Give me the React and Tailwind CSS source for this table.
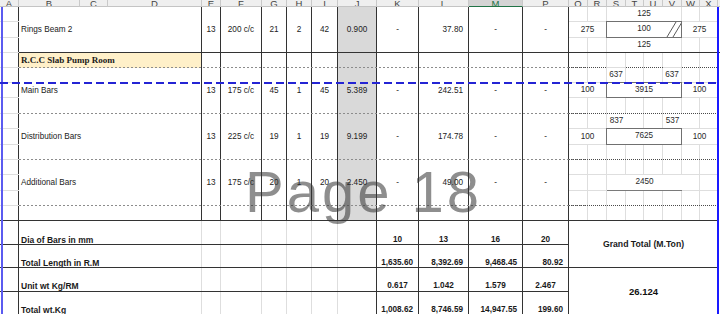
import React from 'react';

const COL = {
  1: 'col-start-1', 2: 'col-start-2', 3: 'col-start-3', 4: 'col-start-4', 5: 'col-start-5',
  6: 'col-start-6', 7: 'col-start-7', 8: 'col-start-8', 9: 'col-start-9', 10: 'col-start-10',
  11: 'col-start-11', 12: 'col-start-12', 13: 'col-start-13', 14: 'col-start-14', 15: 'col-start-15',
  16: 'col-start-16', 17: 'col-start-17', 18: 'col-start-18', 19: 'col-start-19', 20: 'col-start-20',
  21: 'col-start-21', 22: 'col-start-22', 23: 'col-start-23',
};
const SPAN = {
  1: 'col-span-1', 2: 'col-span-2', 3: 'col-span-3', 4: 'col-span-4', 8: 'col-span-8',
  14: 'col-span-14', 22: 'col-span-22',
};
const ROW = {
  1: 'row-start-1', 2: 'row-start-2', 3: 'row-start-3', 4: 'row-start-4', 5: 'row-start-5',
  6: 'row-start-6', 7: 'row-start-7', 8: 'row-start-8', 9: 'row-start-9', 10: 'row-start-10',
  11: 'row-start-11', 12: 'row-start-12', 13: 'row-start-13', 14: 'row-start-14', 15: 'row-start-15',
  16: 'row-start-16', 17: 'row-start-17', 18: 'row-start-18', 19: 'row-start-19',
};
const RSPAN = { 1: 'row-span-1', 2: 'row-span-2', 3: 'row-span-3' };

const LINE = {
  dark: 'bg-[#333]',
  light: 'bg-[#dedede]',
  dashed: 'bg-[repeating-linear-gradient(90deg,#8c8c8c_0_2px,transparent_2px_4px)]',
  dotted: 'bg-[repeating-linear-gradient(90deg,#4a4a4a_0_1px,transparent_1px_2px)]',
};

// horizontal rules sit on the last pixel row of a grid row
const HLine = ({ row, from, span, kind }) => (
  <div className={`${ROW[row]} ${COL[from]} ${SPAN[span]} self-end h-px z-[5] ${LINE[kind]}`} />
);

const HEADERS = [
  ['A', 1], ['B', 2], ['C', 3], ['D', 4], ['E', 5], ['F', 6], ['G', 7], ['H', 8], ['I', 9],
  ['J', 10], ['K', 11], ['L', 12], ['M', 13], ['P', 14], ['Q', 15], ['R', 16], ['S', 17],
  ['T', 18], ['U', 19], ['V', 20], ['W', 21], ['X', 22], ['', 23],
];

const TOP_COLS = [
  { c: 5, cls: 'justify-center' },
  { c: 6, cls: 'justify-center' },
  { c: 7, cls: 'justify-center' },
  { c: 8, cls: 'justify-center' },
  { c: 9, cls: 'justify-center' },
  { c: 10, cls: 'justify-center bg-[#d9d9d9]' },
  { c: 11, cls: 'justify-center' },
  { c: 12, cls: 'justify-end pr-[5px]' },
  { c: 13, cls: 'justify-center' },
  { c: 14, cls: 'justify-center' },
];

const EMPTY = ['', '', '', '', '', '', '', '', '', ''];

const BLOCKS = [
  { r: 2, s: 3, label: 'Rings Beam 2', v: ['13', '200 c/c', '21', '2', '42', '0.900', '-', '37.80', '-', '-'] },
  { r: 5, s: 1, label: 'R.C.C Slab Pump Room', rcc: true, v: EMPTY },
  { r: 6, s: 3, label: 'Main Bars', v: ['13', '175 c/c', '45', '1', '45', '5.389', '-', '242.51', '-', '-'] },
  { r: 9, s: 3, label: 'Distribution Bars', v: ['13', '225 c/c', '19', '1', '19', '9.199', '-', '174.78', '-', '-'] },
  { r: 12, s: 3, label: 'Additional Bars', v: ['13', '175 c/c', '20', '1', '20', '2.450', '-', '49.00', '-', '-'] },
  { r: 15, s: 1, label: '', v: EMPTY },
];

const RIGHT = {
  2: [{ c: 17, s: 4, t: '125' }],
  3: [{ c: 15, s: 2, t: '275' }, { c: 17, s: 4, t: '100', box: true, hatch: true }, { c: 21, s: 2, t: '275' }],
  4: [{ c: 17, s: 4, t: '125' }],
  6: [{ c: 17, s: 1, t: '637' }, { c: 20, s: 1, t: '637' }],
  7: [{ c: 15, s: 2, t: '100' }, { c: 17, s: 4, t: '3915', box: true }, { c: 21, s: 2, t: '100' }],
  9: [{ c: 17, s: 1, t: '837', under: true }, { c: 20, s: 1, t: '537', under: true }],
  10: [{ c: 15, s: 2, t: '100' }, { c: 17, s: 4, t: '7625', box: true }, { c: 21, s: 2, t: '100' }],
  13: [{ c: 17, s: 4, t: '2450', under: true }],
};

const SUMMARY = [
  { r: 16, label: 'Dia of Bars in mm', v: ['10', '13', '16', '20'], right: false, pb: 'pb-[1px]' },
  { r: 17, label: 'Total Length in R.M', v: ['1,635.60', '8,392.69', '9,468.45', '80.92'], right: true, pb: 'pb-[1px]' },
  { r: 18, label: 'Unit wt Kg/RM', v: ['0.617', '1.042', '1.579', '2.467'], right: false, pb: 'pb-[2px]' },
  { r: 19, label: 'Total wt.Kg', v: ['1,008.62', '8,746.59', '14,947.55', '199.60'], right: true, pb: 'pb-[2px]' },
];

const cellBase = 'flex items-center overflow-hidden whitespace-nowrap';

function rightSegments(r) {
  const segs = RIGHT[r] || [];
  const out = [];
  let c = 15;
  while (c <= 22) {
    const seg = segs.find((s) => s.c === c) || { c, s: 1, t: '' };
    out.push(seg);
    c += seg.s;
  }
  return out;
}

const Hatch = () => (
  <svg className="absolute left-[58px] top-0 h-full w-[18px]" viewBox="0 0 18 16" preserveAspectRatio="none">
    <line x1="2" y1="16" x2="11" y2="0" stroke="#555" strokeWidth="1" />
    <line x1="8" y1="16" x2="17" y2="0" stroke="#555" strokeWidth="1" />
  </svg>
);

export default function App() {
  const topRows = [2, 3, 4, 5, 6, 7, 8, 9, 10, 11, 12, 13, 14, 15];

  return (
    <div className="relative h-[314px] w-[720px] overflow-hidden bg-white font-['Liberation_Sans',Arial,sans-serif] text-[8.2px] leading-none text-[#222]">
      <div className="grid grid-cols-[19px_61px_28px_94px_19px_41px_25px_25px_26px_39px_42px_50px_54px_46px_19px_19px_19px_18px_19px_19px_18px_18px_2px] grid-rows-[7px_15px_16px_15px_15px_15px_15px_16px_15px_16px_15px_15px_16px_15px_15px_24px_23px_24px_24px]">
        {/* column headers */}
        {HEADERS.map(([l, c]) => (
          <div
            key={`h${c}`}
            className={`${ROW[1]} ${COL[c]} flex items-end justify-center overflow-hidden text-[9.5px] ${
              l === 'M'
                ? 'border-b border-b-[#217346] bg-[#d4d4d4] text-[#217346]'
                : 'border-b border-b-[#c4c4c4] bg-[#efefef] text-[#444]'
            } ${l ? 'border-r border-r-[#c9c9c9]' : ''}`}
          >
            <span className="mb-[-2px] leading-none">{l}</span>
          </div>
        ))}

        {/* column A */}
        {[...topRows, 16, 17, 18, 19].map((r) => (
          <div key={`a${r}`} className={`${ROW[r]} ${COL[1]} border-r border-r-[#333]`} />
        ))}

        {/* bar schedule rows */}
        {BLOCKS.map((b) => (
          <React.Fragment key={`b${b.r}`}>
            <div
              className={`${ROW[b.r]} ${RSPAN[b.s]} col-start-2 col-span-3 ${cellBase} border-r border-r-[#333] pl-[2px] ${
                b.rcc ? "bg-[#fff0c9] font-['Liberation_Serif',serif] text-[9px] font-bold text-[#1a1a1a]" : ''
              }`}
            >
              {b.label}
            </div>
            {TOP_COLS.map((col, i) => (
              <div
                key={col.c}
                className={`${ROW[b.r]} ${RSPAN[b.s]} ${COL[col.c]} ${cellBase} border-r border-r-[#333] ${col.cls}`}
              >
                {b.v[i]}
              </div>
            ))}
          </React.Fragment>
        ))}

        {/* bending shapes */}
        {topRows.map((r) =>
          rightSegments(r).map((seg) => (
            <div
              key={`r${r}-${seg.c}`}
              className={`${ROW[r]} ${COL[seg.c]} ${SPAN[seg.s]} ${cellBase} justify-center text-[#2a2a2a] ${
                seg.box
                  ? 'relative z-10 -ml-px -mt-px border border-[#707070] bg-white'
                  : seg.under
                  ? 'relative z-10 border-b border-b-[#7a7a7a]'
                  : 'border-r border-r-[#dedede]'
              }`}
            >
              {seg.t}
              {seg.hatch && <Hatch />}
            </div>
          ))
        )}

        {/* totals */}
        {SUMMARY.map((s) => (
          <React.Fragment key={`s${s.r}`}>
            <div
              className={`${ROW[s.r]} col-start-2 col-span-3 flex items-end ${s.pb} overflow-hidden whitespace-nowrap border-r border-r-[#dedede] pl-[2px] text-[8.5px] font-bold text-[#1a1a1a]`}
            >
              {s.label}
            </div>
            {[5, 6, 7, 8, 9].map((c) => (
              <div key={c} className={`${ROW[s.r]} ${COL[c]} border-r border-r-[#dedede]`} />
            ))}
            <div className={`${ROW[s.r]} ${COL[10]} border-r border-r-[#333]`} />
            {[11, 12, 13, 14].map((c, i) => (
              <div
                key={c}
                className={`${ROW[s.r]} ${COL[c]} flex items-end ${s.pb} overflow-hidden whitespace-nowrap border-r border-r-[#333] font-bold text-[#1a1a1a] ${
                  s.right ? 'justify-end pr-[5px]' : 'justify-center'
                }`}
              >
                {s.v[i]}
              </div>
            ))}
          </React.Fragment>
        ))}
        <div className="row-start-16 row-span-2 col-start-15 col-span-8 flex items-center justify-center text-[8.7px] font-bold text-[#1a1a1a]">
          Grand Total (M.Ton)
        </div>
        <div className="row-start-18 row-span-2 col-start-15 col-span-8 flex items-center justify-center text-[9.5px] font-bold text-[#111]">
          26.124
        </div>

        {/* horizontal rules */}
        {[2, 3, 4, 5, 6, 7, 8, 9, 10, 11, 12, 13, 14].map((r) => (
          <HLine key={`la${r}`} row={r} from={1} span={1} kind="light" />
        ))}
        <HLine row={4} from={2} span={22} kind="dark" />
        {[5, 8, 11, 14].map((r) => (
          <HLine key={`ld${r}`} row={r} from={2} span={14} kind="dashed" />
        ))}
        <HLine row={5} from={15} span={2} kind="dotted" />
        <HLine row={5} from={17} span={1} kind="light" />
        <HLine row={5} from={18} span={2} kind="dotted" />
        <HLine row={5} from={20} span={1} kind="light" />
        <HLine row={5} from={21} span={2} kind="dotted" />
        {[8, 11, 14].map((r) => (
          <HLine key={`lo${r}`} row={r} from={15} span={8} kind="dotted" />
        ))}
        {[2, 3, 6, 7, 9, 10, 12, 13].map((r) => (
          <HLine key={`lg${r}`} row={r} from={15} span={8} kind="light" />
        ))}
        <HLine row={15} from={1} span={22} kind="dark" />
        <HLine row={16} from={1} span={14} kind="dark" />
        <HLine row={17} from={1} span={22} kind="dark" />
        <HLine row={18} from={1} span={14} kind="dark" />
      </div>

      {/* page break preview overlays */}
      <div className="pointer-events-none absolute left-[1px] top-[7px] bottom-0 z-20 w-[2px] bg-[#5b5bf0]" />
      <div className="pointer-events-none absolute left-[717px] top-[7px] bottom-0 z-20 w-[2px] bg-[#1a1aff]" />
      <div className="pointer-events-none absolute left-0 top-[82px] z-20 h-[2px] w-[718px] bg-[repeating-linear-gradient(90deg,#2424d4_0_8px,transparent_8px_12px)]" />
      <div className="pointer-events-none absolute left-[245px] top-[163px] z-30 whitespace-nowrap text-[58px] leading-none tracking-[3px] text-[#333] opacity-55">
        Page 18
      </div>
    </div>
  );
}
